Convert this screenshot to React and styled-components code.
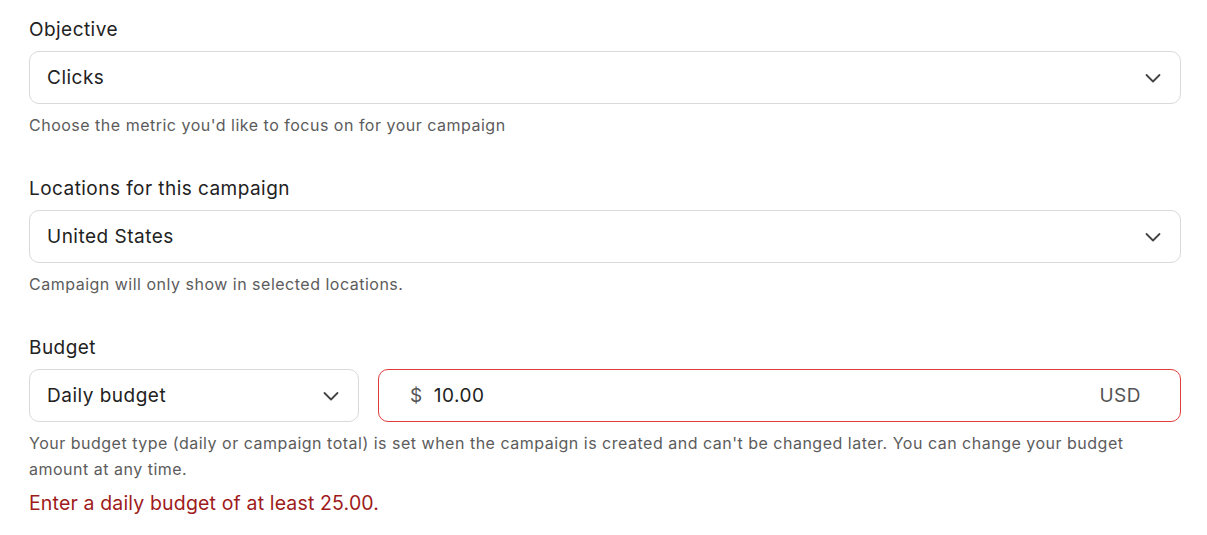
import styled, { createGlobalStyle } from "styled-components";

const GlobalStyle = createGlobalStyle`
  body {
    margin: 0;
    background: #ffffff;
    font-family: Inter, "Noto Sans", sans-serif;
    color: #222222;
  }
`;

const Form = styled.div`
  display: flex;
  flex-direction: column;
  gap: 39px;
  padding: 18px 26px 0 29px;
`;

const Field = styled.div`
  display: flex;
  flex-direction: column;
`;

const Label = styled.label`
  font-size: 19px;
  line-height: 24px;
  letter-spacing: 0.45px;
  color: #222222;
  margin-bottom: 9px;
`;

const Row = styled.div`
  display: flex;
  gap: 19px;
`;

const Box = styled.div`
  box-sizing: border-box;
  height: 53px;
  display: flex;
  align-items: center;
  padding: 0 18px 0 17px;
  border: 1px solid ${(p) => (p.$error ? "#e03c3c" : "#d9d9d9")};
  border-radius: 10px;
  background: #fff;
  font-size: 19px;
  letter-spacing: 0.5px;
  color: #222222;
  flex: ${(p) => p.$flex || "1 1 auto"};
`;

const Value = styled.span`
  flex: 1;
`;

const Prefix = styled.span`
  color: #555555;
  margin: 0 11px 0 14px;
`;

const Suffix = styled.span`
  color: #555555;
  margin-right: 21px;
`;

const Help = styled.p`
  margin: 8px 0 0;
  font-size: 16px;
  line-height: 26px;
  letter-spacing: 0.5px;
  color: #5c5c5c;
`;

const ErrorText = styled.p`
  margin: 8px 0 0;
  font-size: 19.5px;
  line-height: 26px;
  letter-spacing: 0.15px;
  color: #9e1b1b;
`;

function Chevron() {
  return (
    <svg width="18" height="18" viewBox="0 0 18 18" fill="none">
      <path d="M2.5 6l6.5 6.5L15.5 6" stroke="#444" strokeWidth="1.8" strokeLinecap="round" strokeLinejoin="round" />
    </svg>
  );
}

function Select({ value, ...rest }) {
  return (
    <Box {...rest}>
      <Value>{value}</Value>
      <Chevron />
    </Box>
  );
}

export default function App() {
  return (
    <>
      <GlobalStyle />
      <Form>
        <Field>
          <Label>Objective</Label>
          <Select value="Clicks" />
          <Help>Choose the metric you'd like to focus on for your campaign</Help>
        </Field>

        <Field>
          <Label>Locations for this campaign</Label>
          <Select value="United States" />
          <Help>Campaign will only show in selected locations.</Help>
        </Field>

        <Field>
          <Label>Budget</Label>
          <Row>
            <Select value="Daily budget" $flex="0 0 330px" />
            <Box $error>
              <Prefix>$</Prefix>
              <Value>10.00</Value>
              <Suffix>USD</Suffix>
            </Box>
          </Row>
          <Help>
            Your budget type (daily or campaign total) is set when the campaign is created and can't be changed later. You can change your budget amount at any time.
          </Help>
          <ErrorText>Enter a daily budget of at least 25.00.</ErrorText>
        </Field>
      </Form>
    </>
  );
}
